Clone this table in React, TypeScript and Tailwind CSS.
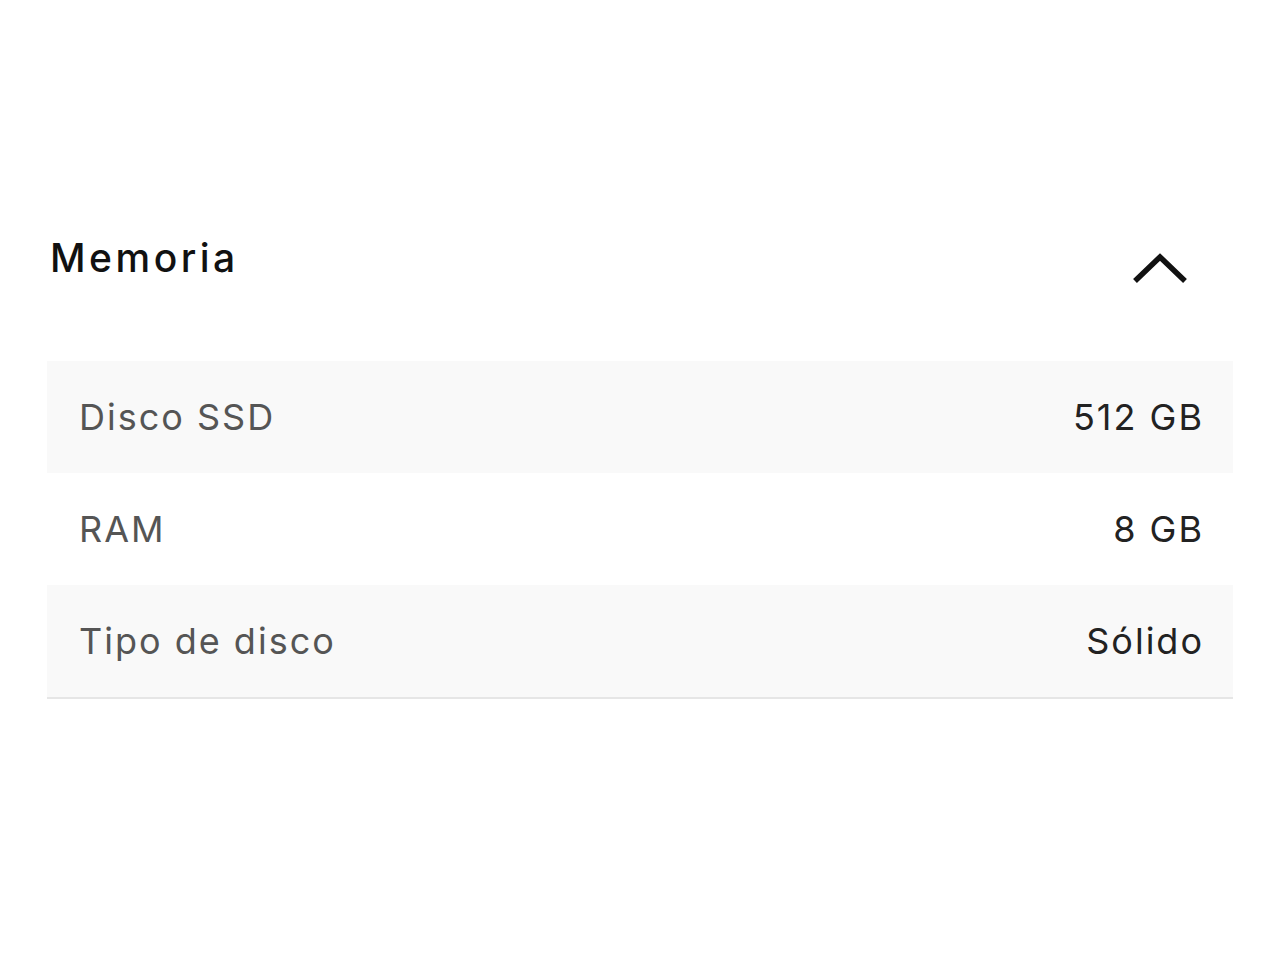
const specs = [
  { label: 'Disco SSD', value: '512 GB', shaded: true },
  { label: 'RAM', value: '8 GB', shaded: false },
  { label: 'Tipo de disco', value: 'Sólido', shaded: true },
];

const App = () => {
  return (
    <div className="min-h-[960px] bg-white pt-[226px] px-[47px]" style={{ fontFamily: 'Inter, "Open Sans", sans-serif' }}>
      <div className="flex items-start justify-between">
        <h2 className="pl-[3px] text-[39px] leading-[64px] font-medium text-[#111] tracking-[3.5px]">Memoria</h2>
        <button className="mr-[45px] mt-[26px]">
          <svg width="56" height="32" viewBox="0 0 56 32" fill="none">
            <path d="M3 29 L28 5 L53 29" stroke="#111" strokeWidth="5.5" />
          </svg>
        </button>
      </div>
      <div className="mt-[71px] border-b-2 border-[#e6e6e6]">
        {specs.map(s => (
          <div key={s.label} className={`flex h-[112px] items-center justify-between pl-[32px] pr-[29px] tracking-[2px] ${s.shaded ? 'bg-[#f9f9f9]' : 'bg-white'}`}>
            <span className="text-[36px] text-[#555]">{s.label}</span>
            <span className="text-[36px] text-[#222]">{s.value}</span>
          </div>
        ))}
      </div>
    </div>
  );
};

export default App;
